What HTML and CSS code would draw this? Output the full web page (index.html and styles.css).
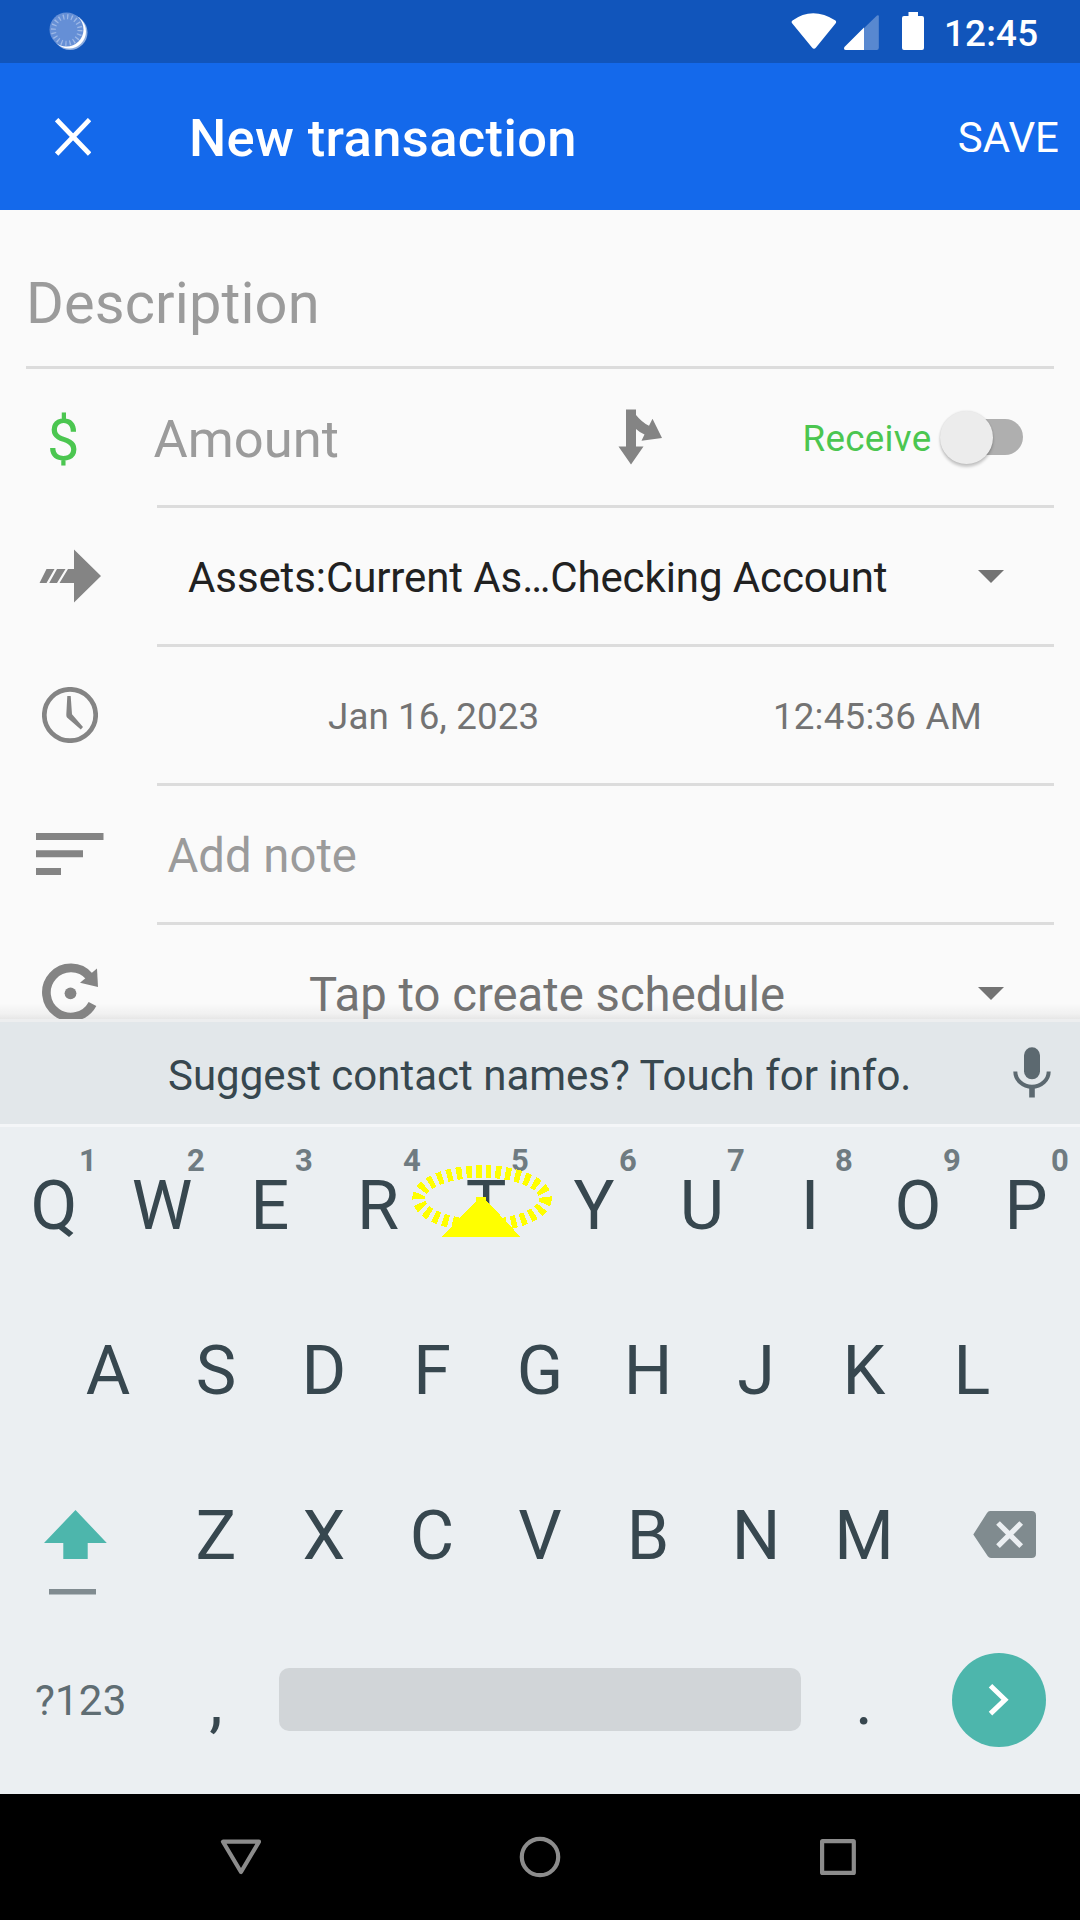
FILE: index.html
```html
<!DOCTYPE html>
<html lang="en">
<head>
<meta charset="utf-8">
<title>New transaction</title>
<link rel="stylesheet" href="styles.css">
</head>
<body>
<div class="screen">
  <header class="status-bar">
    <svg class="status-app" width="44" height="44" viewBox="46 9 44 44">
      <circle cx="70" cy="32.500" r="17.500" fill="#8eaee0"/>
      <circle cx="69" cy="31.500" r="17" fill="#fff"/>
      <circle cx="66.500" cy="29.500" r="17" fill="#658fd6"/>
      <circle cx="66.700" cy="30" r="13.300" fill="none" stroke="#9db8e6" stroke-width="5" stroke-dasharray="1.300 2.878"/>
    </svg>
    <svg class="status-icons" width="140" height="44" viewBox="786 9 140 44">
      <path d="M792.500 20.500q20-14.500 43 0 1.300 1.500 0 3L816 47.500q-2 2.500-4 0L792.300 23.500q-1.500-1.500.2-3z" fill="#fff"/>
      <path d="M877 15.500q1.800-1 1.800.8V48q0 2-2 2H846q-3-.5-1.500-3z" fill="#5888d0"/>
      <path d="M864 27.500V50H846q-3-.5-1.500-3z" fill="#fff"/>
      <path d="M908.500 12h9.500v4h4q2 0 2 2v30q0 2-2 2h-18q-2 0-2-2V18q0-2 2-2h4.500z" fill="#fff"/>
    </svg>
    <time class="status-time">12:45</time>
  </header>

  <div class="app-bar">
    <svg class="close" width="36" height="38" viewBox="0 0 36 38"><path d="M1.600 1.600l33 34.500M34.600 1.600l-33 34.500" stroke="#fff" stroke-width="4.800" fill="none"/></svg>
    <h1 class="title">New transaction</h1>
    <button class="save">SAVE</button>
  </div>

  <main class="form">
    <div class="row row-description"><span class="hint hint-large">Description</span></div>

    <div class="row">
      <div class="lead lead-currency">$</div>
      <div class="field">
        <span class="hint hint-amount">Amount</span>
        <svg class="split" width="46" height="57" viewBox="617 408 46 57"><path d="M626 409.500h10v5.500q6 7.500 13 10.800l3.500-7 9.500 19.200-20.500 2.700 3-6.300q-5-2-8.500-5.400V446.500h7.500L631 464.500l-12.500-18h7.500z" fill="#848484"/></svg>
        <span class="receive">Receive</span>
        <span class="switch"><span class="track"></span><span class="thumb"></span></span>
      </div>
    </div>

    <div class="row">
      <div class="lead"><svg width="62" height="54" viewBox="39 549 62 54"><path d="M74 549.500L101 576 74 602.500V583H59.500l8.500-14h6zM46.500 569h8l-8 14H39.500zM57 569h8.500l-8.500 14h-7.800z" fill="#848484"/></svg></div>
      <div class="field">
        <span class="account">Assets:Current As…Checking Account</span>
        <svg class="caret" width="26" height="13" viewBox="0 0 26 13"><path d="M0 0h26L13 13z" fill="#737373"/></svg>
      </div>
    </div>

    <div class="row">
      <div class="lead lead-clock"><svg width="56" height="56" viewBox="42 687 56 56"><circle cx="70" cy="715" r="25.700" fill="none" stroke="#848484" stroke-width="4.700"/><path d="M67.300 696h3.400l1.300 18.300L83 727l-2.200 2.600L67 717.500q-.8-1-.7-3z" fill="#848484"/></svg></div>
      <div class="field">
        <span class="date">Jan 16, 2023</span>
        <span class="clock-time">12:45:36 AM</span>
      </div>
    </div>

    <div class="row">
      <div class="lead lead-note"><svg width="68" height="42" viewBox="0 0 68 42"><path d="M0 0h67.500v7H0zM0 17.300h47v7H0zM0 35h25v7H0z" fill="#848484"/></svg></div>
      <div class="field"><span class="hint hint-note">Add note</span></div>
    </div>

    <div class="row">
      <div class="lead lead-repeat"><svg width="58" height="60" viewBox="41 963 58 60"><path d="M97 968.500l1 18.500-18-4.300z" fill="#848484"/><path d="M89.500 976.500A24.500 24.500 0 1 0 92.500 1004" fill="none" stroke="#848484" stroke-width="8.700"/><circle cx="70.500" cy="993.300" r="5.900" fill="#848484"/></svg></div>
      <div class="field">
        <span class="schedule">Tap to create schedule</span>
        <svg class="caret" width="26" height="13" viewBox="0 0 26 13"><path d="M0 0h26L13 13z" fill="#737373"/></svg>
      </div>
    </div>
  </main>

  <section class="keyboard">
    <div class="suggestion">
      <span class="suggestion-text">Suggest contact names? Touch for info.</span>
      <svg class="mic" width="38" height="52" viewBox="1013 1047 38 52"><rect x="1024" y="1047.300" width="16" height="32" rx="8" fill="#5c6970"/><path d="M1015.300 1071.500a16.700 15.300 0 0 0 33.400 0" fill="none" stroke="#5c6970" stroke-width="4"/><path d="M1029.200 1088h5.600v9.500h-5.600z" fill="#5c6970"/></svg>
    </div>
    <div class="keys">
      <div class="key-row">
        <span class="key">Q<sup>1</sup></span><span class="key">W<sup>2</sup></span><span class="key">E<sup>3</sup></span><span class="key">R<sup>4</sup></span><span class="key key-touched">T<sup>5</sup>
          <svg class="pointer" width="142" height="76" viewBox="411 1163 142 76" shape-rendering="crispEdges"><ellipse cx="482" cy="1198.500" rx="63.500" ry="27" fill="none" stroke="#ff0" stroke-width="12.500" stroke-dasharray="5.500 4.300"/><path d="M476 1197h10v3l34.500 37H441.500l34.500-36z" fill="#ff0"/></svg>
        </span><span class="key">Y<sup>6</sup></span><span class="key">U<sup>7</sup></span><span class="key">I<sup>8</sup></span><span class="key">O<sup>9</sup></span><span class="key">P<sup>0</sup></span>
      </div>
      <div class="key-row key-row-inset">
        <span class="key">A</span><span class="key">S</span><span class="key">D</span><span class="key">F</span><span class="key">G</span><span class="key">H</span><span class="key">J</span><span class="key">K</span><span class="key">L</span>
      </div>
      <div class="key-row">
        <span class="key-wide key-shift"><svg width="64" height="86" viewBox="44 1510 64 86"><path d="M75.500 1510l31.300 33H87.700v16H63.300v-16H44z" fill="#4db6ac"/><path d="M49 1589h47v5.500H49z" fill="#808b90"/></svg></span>
        <span class="key">Z</span><span class="key">X</span><span class="key">C</span><span class="key">V</span><span class="key">B</span><span class="key">N</span><span class="key">M</span>
        <span class="key-wide key-delete"><svg width="63" height="48" viewBox="973 1511 63 48"><path d="M990 1511h41.500q4.500 0 4.500 4.500v38.200q0 4.300-4.500 4.300H991q-2 0-3.200-1.800L973.300 1534.500 987 1513q1.200-2 3-2z" fill="#808b8f"/><path d="M998 1523l23.200 23.200M1021.200 1523L998 1546.200" stroke="#ebeff2" stroke-width="5.200"/></svg></span>
      </div>
      <div class="key-row key-row-bottom">
        <span class="key-wide key-symbols">?123</span>
        <span class="key">,</span>
        <span class="space"></span>
        <span class="key">.</span>
        <span class="key-wide key-enter"><svg width="94" height="94" viewBox="952 1653 94 94"><circle cx="999" cy="1700" r="47" fill="#4db6ac"/><path d="M990.500 1685.800l14.500 13.900-14.500 13.900" fill="none" stroke="#fff" stroke-width="5"/></svg></span>
      </div>
    </div>
  </section>

  <nav class="nav-bar">
    <svg width="44" height="44" viewBox="219 1835 44 44"><path d="M223 1841.700h36L241 1872z" fill="none" stroke="#8c8c8c" stroke-width="4.200" stroke-linejoin="round"/></svg>
    <svg width="44" height="44" viewBox="518 1835 44 44"><circle cx="540" cy="1857" r="18.200" fill="none" stroke="#8c8c8c" stroke-width="4.200"/></svg>
    <svg width="44" height="44" viewBox="816 1835 44 44"><rect x="822.100" y="1841.200" width="31.700" height="31.700" rx=".5" fill="none" stroke="#8c8c8c" stroke-width="4.200" stroke-linejoin="round"/></svg>
  </nav>
</div>
</body>
</html>
```
FILE: styles.css
```css
* { box-sizing: border-box; }

body {
  margin: 0;
  font-family: Roboto, "Liberation Sans", sans-serif;
  background: #000;
}

svg { display: block; flex: none; }

.screen {
  width: 1080px;
  height: 1920px;
  display: flex;
  flex-direction: column;
  overflow: hidden;
  white-space: nowrap;
}

/* status bar */
.status-bar {
  flex: none;
  height: 63px;
  padding: 0 0 1px 46px;
  display: flex;
  align-items: center;
  background: #1155bb;
  color: #fff;
}
.status-icons { margin-left: 696px; }
.status-time {
  margin-left: 18px;
  padding-top: 4px;
  font-size: 36.75px;
  font-weight: 500;
  letter-spacing: .2px;
}

/* app bar */
.app-bar {
  flex: none;
  height: 147px;
  padding: 0 21px 0 55px;
  display: flex;
  align-items: center;
  background: #1469eb;
  color: #fff;
}
.title {
  margin: 0 auto 0 98px;
  padding-top: 3px;
  font-size: 52.500px;
  font-weight: 500;
  letter-spacing: .35px;
}
.save {
  margin: 0;
  padding: 2px 0 0;
  border: 0;
  background: none;
  color: inherit;
  font: 42px Roboto, sans-serif;
}

/* form */
.form {
  flex: none;
  height: 809px;
  overflow: hidden;
  background: linear-gradient(transparent 793px, #0000000a 804px, #00000014), #fafafa;
}
.row {
  height: 139px;
  padding-right: 26px;
  display: flex;
}
.row-description {
  height: 159px;
  margin: 0 26px;
  padding: 31px 0 0;
  align-items: center;
  border-bottom: 3px solid #dcdcdc;
  line-height: 67px;
}
.lead {
  width: 157px;
  padding: 0 0 3px 39px;
  flex: none;
  display: flex;
  align-items: center;
}
.lead-currency {
  padding: 2px 0 0 47px;
  color: #4bc650;
  font-size: 57.750px;
}
.lead-clock { padding-left: 42px; }
.lead-note { padding-left: 36px; }
.lead-repeat { padding-left: 41px; }
.field {
  flex: 1;
  padding-top: 3px;
  display: flex;
  align-items: center;
  border-bottom: 3px solid #dcdcdc;
}
.hint { color: #9b9b9b; }
.hint-large {
  font-size: 57.750px;
  letter-spacing: .12px;
}
.hint-amount {
  width: 463px;
  margin-left: -3.500px;
  font-size: 52.500px;
}
.split { margin-top: -5px; }
.receive {
  margin-left: 140px;
  color: #4bc650;
  font-size: 36.750px;
  letter-spacing: .3px;
}
.switch {
  margin: -3px 0 0 9px;
  display: flex;
  align-items: center;
}
.thumb {
  order: -1;
  z-index: 1;
  width: 53px;
  height: 53px;
  border-radius: 50%;
  background: #ececec;
  box-shadow: 0 3px 3px #0003, 0 0 2px #0002;
}
.track {
  width: 66px;
  height: 36px;
  margin-left: -36px;
  border-radius: 18px;
  background: #afafaf;
}
.account {
  margin-left: 31px;
  color: #212121;
  font-size: 42px;
  letter-spacing: -.1px;
}
.caret { margin: -2px 50px 0 auto; }
.date, .clock-time {
  color: #737373;
  font-size: 36.750px;
}
.date {
  margin-left: 171px;
  letter-spacing: .1px;
}
.clock-time {
  margin: 0 72px 0 auto;
  letter-spacing: .2px;
}
.hint-note {
  margin-left: 10.500px;
  font-size: 47.250px;
}
.schedule {
  margin-left: 152px;
  font-size: 47.250px;
  line-height: 56px;
  color: #737373;
}

/* keyboard */
.keyboard {
  flex: none;
  height: 775px;
  background: #ebeff2;
  color: #37474f;
}
.suggestion {
  height: 105px;
  padding: 4px 29px 0 168px;
  border-top: 3px solid #edeeef;
  display: flex;
  align-items: center;
  justify-content: space-between;
  background: #e2e7ea;
  font-size: 42px;
}
.mic { margin-top: -5px; }
.keys {
  height: 670px;
  box-shadow: inset 0 3px #f4f6f8;
}
.key-row {
  height: 165px;
  display: flex;
  line-height: 165px;
  font-size: 68.250px;
}
.key-row-inset { padding: 0 54px; }
.key {
  position: relative;
  width: 108px;
  flex: none;
  text-align: center;
}
.key sup {
  position: absolute;
  top: 17px;
  left: 79px;
  font-size: 31px;
  line-height: 40px;
  font-weight: 700;
  color: #6f7b81;
}
.pointer {
  position: absolute;
  top: 39px;
  left: -21px;
}
.key-wide {
  width: 162px;
  flex: none;
}
.key-shift { padding: 56px 0 0 44px; }
.key-delete { padding: 57px 0 0 55px; }
.key-symbols {
  padding-left: 35px;
  font-size: 42px;
  line-height: 164px;
  letter-spacing: .2px;
  color: #5f6d73;
}
.space {
  flex: 1;
  height: 63px;
  margin: 49px 9px 0;
  border-radius: 10px;
  background: #d1d5d8;
}
.key-enter { padding: 34px 0 0 34px; }

/* navigation bar */
.nav-bar {
  flex: none;
  height: 126px;
  padding: 0 220px 0 219px;
  display: flex;
  align-items: center;
  justify-content: space-between;
  background: #000;
}
```
